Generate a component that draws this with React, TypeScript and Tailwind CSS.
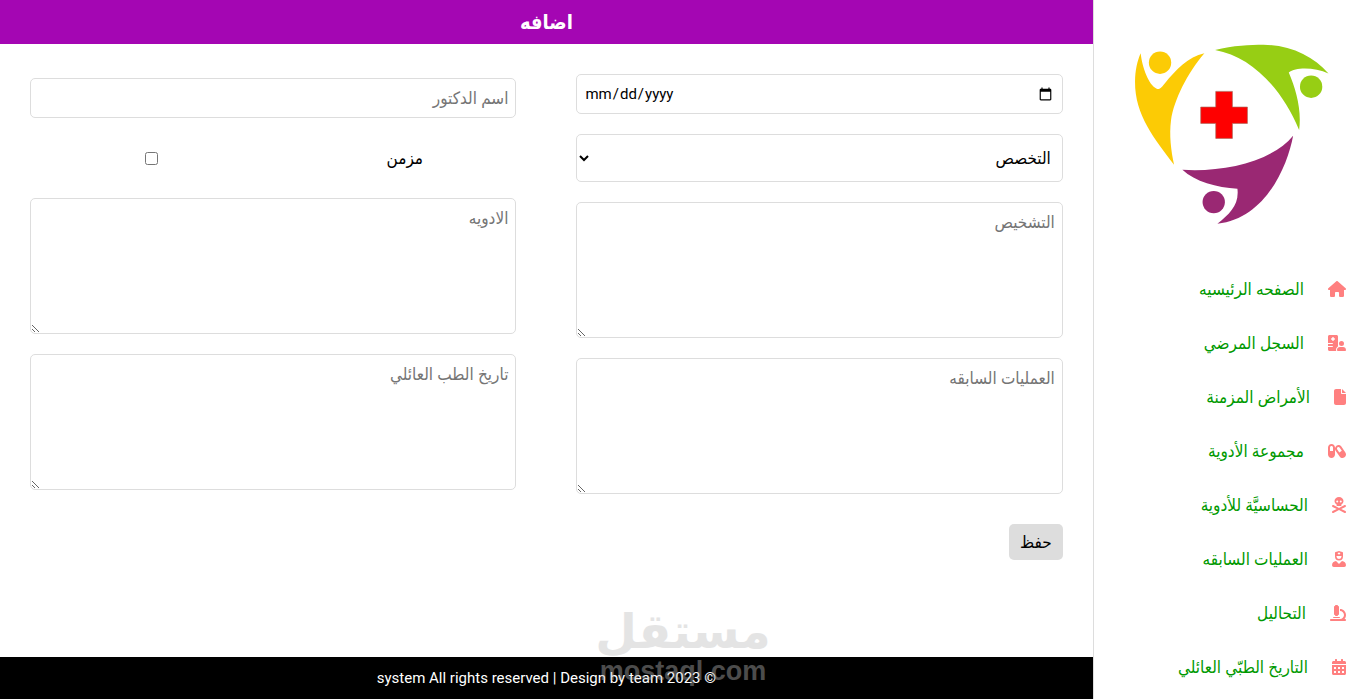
import type { IconType } from 'react-icons';
import { FaCalendarAlt, FaUserNurse } from 'react-icons/fa';
import { FaCapsules, FaFile, FaHospitalUser, FaHouse, FaMicroscope, FaSkullCrossbones } from 'react-icons/fa6';

interface NavItem {
  label: string;
  icon: IconType;
  iconWidth: string;
}

const navItems: NavItem[] = [
  { label: 'الصفحه الرئيسيه', icon: FaHouse, iconWidth: 'w-[18px]' },
  { label: 'السجل المرضي', icon: FaHospitalUser, iconWidth: 'w-[18px]' },
  { label: 'الأمراض المزمنة', icon: FaFile, iconWidth: 'w-3' },
  { label: 'مجموعة الأدوية', icon: FaCapsules, iconWidth: 'w-[18px]' },
  { label: 'الحساسيَّة للأدوية', icon: FaSkullCrossbones, iconWidth: 'w-[14px]' },
  { label: 'العمليات السابقه', icon: FaUserNurse, iconWidth: 'w-[14px]' },
  { label: 'التحاليل', icon: FaMicroscope, iconWidth: 'w-4' },
  { label: 'التاريخ الطبّي العائلي', icon: FaCalendarAlt, iconWidth: 'w-[14px]' },
];

const fieldClass =
  'block w-full rounded-[5px] border border-[#ddd] bg-white px-[7px] text-black placeholder:text-[#757575]';

function Logo() {
  return (
    <svg viewBox="0 0 272 262" className="block w-full" role="img" aria-label="logo">
      <g transform="translate(6 20) scale(0.3333)">
        <g fill="#fccb05">
          <path d="M122 100C126 140 146 197 170 206C180 210 186 199 194 190C228 150 264 110 313 100C262 160 222 240 213 300C207 345 213 392 222 434C165 358 104 285 105 185C105 152 112 122 122 100Z" />
          <circle cx="180" cy="128" r="33.5" />
        </g>
        <g fill="#97ce14">
          <path d="M345 90C400 76 450 74 490 74C570 75 640 108 685 160C645 142 588 140 566 157C588 208 605 270 597 330C545 205 455 110 345 90Z" />
          <circle cx="633" cy="200" r="33.5" />
        </g>
        <g fill="#9a2873">
          <path d="M247 449C370 457 515 425 579 347C562 440 495 596 352 611C388 582 418 555 412 506C350 502 285 485 247 449Z" />
          <circle cx="341" cy="546" r="33.5" />
        </g>
        <path
          d="M347 214H397V261H442V310H397V355H347V310H302V261H347Z"
          fill="#fe0000"
          stroke="#a86a5c"
          strokeWidth="2"
        />
      </g>
    </svg>
  );
}

function Sidebar() {
  return (
    <aside className="w-1/5 shrink-0 overflow-hidden border-l border-[#ddd]">
      <Logo />
      <nav>
        <ul>
          {navItems.map(({ label, icon: Icon, iconWidth }) => (
            <li key={label}>
              <a href="#" className="flex h-[54px] items-center gap-6 px-5 whitespace-nowrap text-[#009900]">
                <Icon className={`h-4 shrink-0 text-[#ff8080] ${iconWidth}`} />
                <span>{label}</span>
              </a>
            </li>
          ))}
        </ul>
      </nav>
    </aside>
  );
}

function Watermark() {
  return (
    <div
      dir="ltr"
      aria-hidden="true"
      className="pointer-events-none absolute bottom-3 left-[600px] flex w-[166px] flex-col items-center text-[#bdbdbd] opacity-40"
    >
      <span className="font-['DejaVu_Sans',sans-serif] text-[48px] leading-[48px] font-bold">مستقل</span>
      <span className="font-['Liberation_Sans',sans-serif] text-[27px] leading-8 font-bold">mostaql.com</span>
    </div>
  );
}

export default function App() {
  return (
    <div
      dir="rtl"
      className="relative flex h-screen overflow-hidden bg-white font-[Roboto,'DejaVu_Sans_Condensed','DejaVu_Sans',sans-serif] text-[17px] leading-6"
    >
      <Sidebar />

      <div className="flex min-w-0 flex-1 flex-col">
        <header className="flex h-11 items-center justify-center bg-[#a406b3]">
          <h1 className="text-xl font-bold text-white">اضافه</h1>
        </header>

        <form className="flex-1 px-[30px] pt-[30px]" onSubmit={(e) => e.preventDefault()}>
          <div className="flex items-center gap-[60px]">
            <div className="flex flex-1 flex-col gap-5">
              <input type="date" dir="ltr" aria-label="التاريخ" className={`${fieldClass} h-10 text-[15px]`} />
              <select aria-label="التخصص" className={`${fieldClass} h-12`}>
                <option>التخصص</option>
              </select>
              <textarea aria-label="التشخيص" placeholder="التشخيص" className={`${fieldClass} h-[136px] py-[7px]`} />
              <textarea
                aria-label="العمليات السابقه"
                placeholder="العمليات السابقه"
                className={`${fieldClass} h-[136px] py-[7px]`}
              />
            </div>

            <div className="flex flex-1 flex-col gap-5">
              <input type="text" aria-label="اسم الدكتور" placeholder="اسم الدكتور" className={`${fieldClass} h-10`} />
              <div className="flex h-10 items-center">
                <label htmlFor="chronic" className="w-1/2 pl-5 text-center text-black">
                  مزمن
                </label>
                <div className="flex w-1/2 justify-center">
                  <input id="chronic" type="checkbox" className="h-[13px] w-[13px]" />
                </div>
              </div>
              <textarea aria-label="الادويه" placeholder="الادويه" className={`${fieldClass} h-[136px] py-[7px]`} />
              <textarea
                aria-label="تاريخ الطب العائلي"
                placeholder="تاريخ الطب العائلي"
                className={`${fieldClass} h-[136px] py-[7px]`}
              />
            </div>
          </div>

          <button type="submit" className="mt-[30px] h-9 rounded-[5px] bg-[#ddd] px-[11px] text-black">
            حفظ
          </button>
        </form>

        <footer className="flex h-[42px] items-center justify-center bg-black text-[15px] text-white">
          <p>© 2023 system All rights reserved | Design by team</p>
        </footer>
      </div>

      <Watermark />
    </div>
  );
}
